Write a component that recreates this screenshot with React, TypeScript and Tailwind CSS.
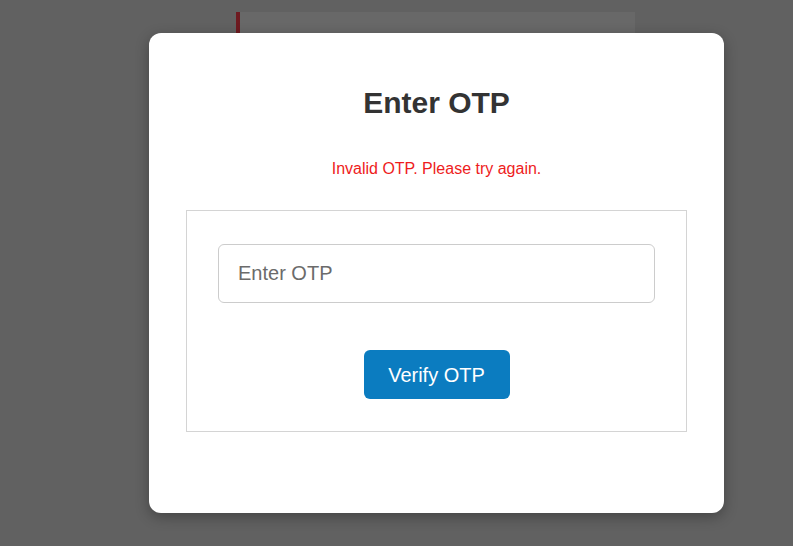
import React from "react";

export default function App() {
  return (
    <div className="relative h-[546px] w-[793px] overflow-hidden bg-[#616161] font-['Liberation_Sans',Arial,sans-serif]">
      {/* page behind the overlay */}
      <div className="ml-[236px] mt-[12px] flex w-[399px]">
        <div className="w-[4px] self-stretch bg-[#6e1a20]" />
        <div className="flex-1 bg-[#686868] px-[18px] pb-[40px] pt-[16px] text-[16px] text-[#5a5a5a]">
          Enter the OTP sent to your email field below
        </div>
      </div>

      {/* modal */}
      <div className="absolute left-[149px] top-[33px] w-[575px] rounded-[12px] bg-white px-[37px] pb-[81px] pt-[55px] shadow-[0_4px_14px_rgba(0,0,0,0.3)]">
        <h2 className="text-center text-[30px] font-bold leading-none text-[#333333]">Enter OTP</h2>
        <p className="mt-[43px] text-center text-[16px] leading-none text-[#ee1c1c]">
          Invalid OTP. Please try again.
        </p>
        <div className="mt-[33px] flex flex-col items-center border border-[#d4d4d4] px-[31px] pb-[32px] pt-[33px]">
          <input
            type="text"
            placeholder="Enter OTP"
            className="h-[59px] w-full rounded-[6px] border border-[#cccccc] px-[19px] text-[20px] text-[#333] outline-none placeholder:text-[#6b6b6b]"
          />
          <button className="mt-[47px] h-[49px] w-[146px] rounded-[6px] bg-[#0b7cc0] text-[20px] text-white">
            Verify OTP
          </button>
        </div>
      </div>
    </div>
  );
}
